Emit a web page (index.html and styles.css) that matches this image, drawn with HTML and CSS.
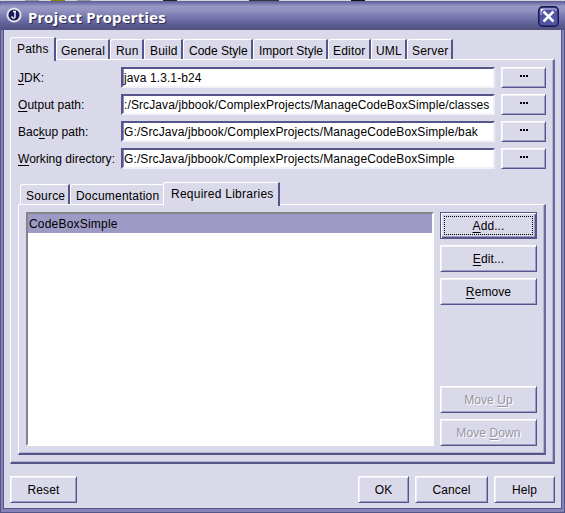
FILE: index.html
```html
<!DOCTYPE html>
<html lang="en">
<head>
<meta charset="utf-8">
<title>Project Properties</title>
<link rel="stylesheet" href="styles.css">
</head>
<body>
<div class="backdrop"><i class="b1"></i><i class="b2"></i><i class="b3"></i><i class="b4"></i><i class="b5"></i><i class="b6"></i></div>
<div class="window">
  <header class="titlebar">
    <svg class="app-icon" width="16" height="16" viewBox="0 0 16 16"><circle cx="8" cy="8" r="7.8" fill="#aeb4c2"/><circle cx="8" cy="8" r="7" fill="#f5f5ee"/><circle cx="8" cy="8" r="5.6" fill="#17185e"/><path d="M7 4.5h3M9 4.5v5.2c0 1.6-2.4 1.8-3 .8V9.2" fill="none" stroke="#fff" stroke-width="1.4"/></svg>
    <h1>Project Properties</h1>
    <button class="close" aria-label="Close"><svg width="21" height="21" viewBox="0 0 21 21"><rect x=".7" y=".7" width="19.6" height="19.6" rx="4" fill="#5153a0" stroke="#151653" stroke-width="1.4"/><path d="M3 9V4q0-1 1-1h12q2 0 2 2" fill="none" stroke="#8f90cb" stroke-width="2"/><path d="M5.5 5.5l10 10M15.5 5.5l-10 10" stroke="#fff" stroke-width="2.5"/><path d="M3 6V3h3z" fill="#fff"/></svg></button>
  </header>
  <main class="content">
    <nav class="tabs">
      <div class="tab active paths">Paths</div><div class="tab general">General</div><div class="tab run">Run</div><div class="tab build">Build</div><div class="tab code">Code Style</div><div class="tab import">Import Style</div><div class="tab editor">Editor</div><div class="tab uml">UML</div><div class="tab server">Server</div>
    </nav>
    <section class="panel outer">
      <div class="fields">
        <label><u>J</u>DK:</label><div class="input"><span>java 1.3.1-b24</span></div><button class="btn more"><i></i><i></i><i></i></button>
        <label><u>O</u>utput path:</label><div class="input"><span>:/SrcJava/jbbook/ComplexProjects/ManageCodeBoxSimple/classes</span></div><button class="btn more"><i></i><i></i><i></i></button>
        <label>Bac<u>k</u>up path:</label><div class="input"><span>G:/SrcJava/jbbook/ComplexProjects/ManageCodeBoxSimple/bak</span></div><button class="btn more"><i></i><i></i><i></i></button>
        <label><u>W</u>orking directory:</label><div class="input"><span>G:/SrcJava/jbbook/ComplexProjects/ManageCodeBoxSimple</span></div><button class="btn more"><i></i><i></i><i></i></button>
      </div>
      <nav class="tabs inner-tabs">
        <div class="tab source">Source</div><div class="tab docs">Documentation</div><div class="tab active required">Required Libraries</div>
      </nav>
      <section class="panel inner">
        <div class="list"><div class="row">CodeBoxSimple</div></div>
        <div class="actions">
          <button class="btn default"><span><u>A</u>dd...</span></button>
          <button class="btn"><span><u>E</u>dit...</span></button>
          <button class="btn"><span><u>R</u>emove</span></button>
          <button class="btn off up"><span>Move <u>U</u>p</span></button>
          <button class="btn off"><span>Move <u>D</u>own</span></button>
        </div>
      </section>
    </section>
    <footer>
      <button class="btn reset">Reset</button>
      <button class="btn ok">OK</button>
      <button class="btn cancel">Cancel</button>
      <button class="btn help">Help</button>
    </footer>
  </main>
</div>
</body>
</html>
```
FILE: styles.css
```css
* { box-sizing: border-box; }
body { margin: 0; width: 565px; height: 513px; overflow: hidden; background: #dad9e9; font: 12px/14px "Liberation Sans", Arial, sans-serif; letter-spacing: .2px; color: #000; }
u { text-decoration: underline 1px; text-underline-offset: 2px; text-decoration-skip-ink: none; }
.backdrop { height: 1px; display: flex; background: #d5d4dc; padding-left: 25px; gap: 12px; }
.backdrop i { height: 1px; width: 14px; background: #999; }
.backdrop .b2 { background: #878700; }
.backdrop .b4 { margin-left: 60px; background: #222; }
.backdrop .b5 { margin-left: 60px; background: #334; width: 30px; }
.backdrop .b6 { margin-left: 60px; background: #111; }
.window { height: 512px; border: solid #55558c; border-width: 0 1px 1px; background: #8584b5; display: flex; flex-direction: column; }
.titlebar { height: 29px; flex: none; margin: 0 -1px; padding: 4px 6px 0; display: flex; align-items: flex-start; background: linear-gradient(#5a598f 0, #6968a0 4%, #9998c5 18%, #9392c0 32%, #7877ae 55%, #6867a1 70%, #565587 92%, #55547f 100%); border-radius: 4px 4px 0 0; }
.app-icon { margin-top: 2px; }
h1 { margin: 2px 0 0 6px; font: bold 15px/20px "Noto Sans", sans-serif; letter-spacing: .2px; color: #fff; text-shadow: 1px 1px 1px #282852; }
.close { margin: 1px 0 0 auto; padding: 0; border: 0; background: none; width: 21px; height: 21px; }
.close svg { display: block; }
.content { height: 479px; margin: 0 2px; border: solid #55558c; border-width: 0 1px 1px; padding: 7px 6px 0; background: #dad9e9; }
.tabs { display: flex; align-items: flex-end; height: 22px; }
.tab { height: 20px; border: 1px solid #fff; border-right: 2px solid #55558c; border-bottom: 0; border-radius: 3px 1px 0 0; padding: 4px 0 0 4px; white-space: nowrap; background: #dad9e9; position: relative; }
.tab.active { height: 24px; margin-bottom: -2px; z-index: 1; padding-top: 4px; }
.tab.active.paths { padding-left: 6px; }
.paths { width: 46px; } .general { width: 54px; } .run { width: 34px; } .build { width: 39px; } .code { width: 70px; } .import { width: 75px; } .editor { width: 43px; } .uml { width: 36px; } .server { width: 46px; }
.tab.run, .tab.build { padding-left: 5px; }
.tab.code, .tab.import { padding-left: 5px; letter-spacing: 0; }
.panel { border: 1px solid #fff; border-right: 2px solid #55558c; border-bottom: 2px solid #55558c; border-right-color: #6b6a9f; box-shadow: inset -1px -1px #b4b3d2; }
.outer { width: 545px; height: 405px; padding: 7px 7px 0; }
.fields { display: grid; grid-template-columns: 103px 374px 45px; row-gap: 6px; grid-auto-rows: 21px; letter-spacing: .11px; }
.fields .more { margin-left: 6px; width: 45px; }
label { padding: 4px 0 0; white-space: nowrap; letter-spacing: .03px; }
.input { background: #fff; border: 2px solid #55558c; border-right-color: #eeeef8; border-bottom-color: #f1f1f8; box-shadow: inset 1px 0 #8c8bb8; padding: 2px 0 0 1px; white-space: nowrap; overflow: hidden; }
.btn { display: flex; align-items: center; justify-content: center; padding: 0; margin: 0; font: inherit; letter-spacing: .1px; color: inherit; background: #dad9e9; border: 1px solid; border-color: #fff #55558c #55558c #fff; box-shadow: inset 1px 1px #f0f0f7, inset -1px -1px #9d9bc6; border-radius: 0; height: 27px; }
.more { height: 21px; gap: 1px; padding-bottom: 3px; }
.more i { width: 2px; height: 2px; background: #000; }
.inner-tabs { margin: 13px 0 0 2px; height: 22px; }
.source { width: 50px; } .docs { width: 93px; border-right: 0; } .required { width: 117px; }
.tab.source, .tab.docs { padding-left: 5px; }
.inner-tabs .active { padding-left: 7px; letter-spacing: .25px; }
.inner { width: 528px; height: 251px; padding: 7px 7px 0; display: flex; gap: 6px; }
.list { width: 408px; height: 234px; background: #fff; border: 2px solid #fff; border-top-color: #858589; border-left-color: #858589; }
.row { height: 19px; background: #9d9bc6; padding: 3px 0 0 1px; }
.actions { width: 97px; height: 234px; display: flex; flex-direction: column; gap: 6px; }
.default { border: 1px solid #55558c; box-shadow: inset 1px 1px #fff, inset -1px -1px #55558c, inset -2px -2px #9d9bc6; position: relative; }
.default::after { content: ""; position: absolute; inset: 3px; border: 1px dotted #000; }
.up { margin-top: auto; }
.off { color: #96959f; text-shadow: 1px 1px #fff; }
footer { display: flex; margin-top: 12px; gap: 6px; width: 545px; }
.reset { width: 67px; margin-right: auto; } .ok { width: 51px; } .cancel { width: 73px; } .help { width: 61px; }
```
